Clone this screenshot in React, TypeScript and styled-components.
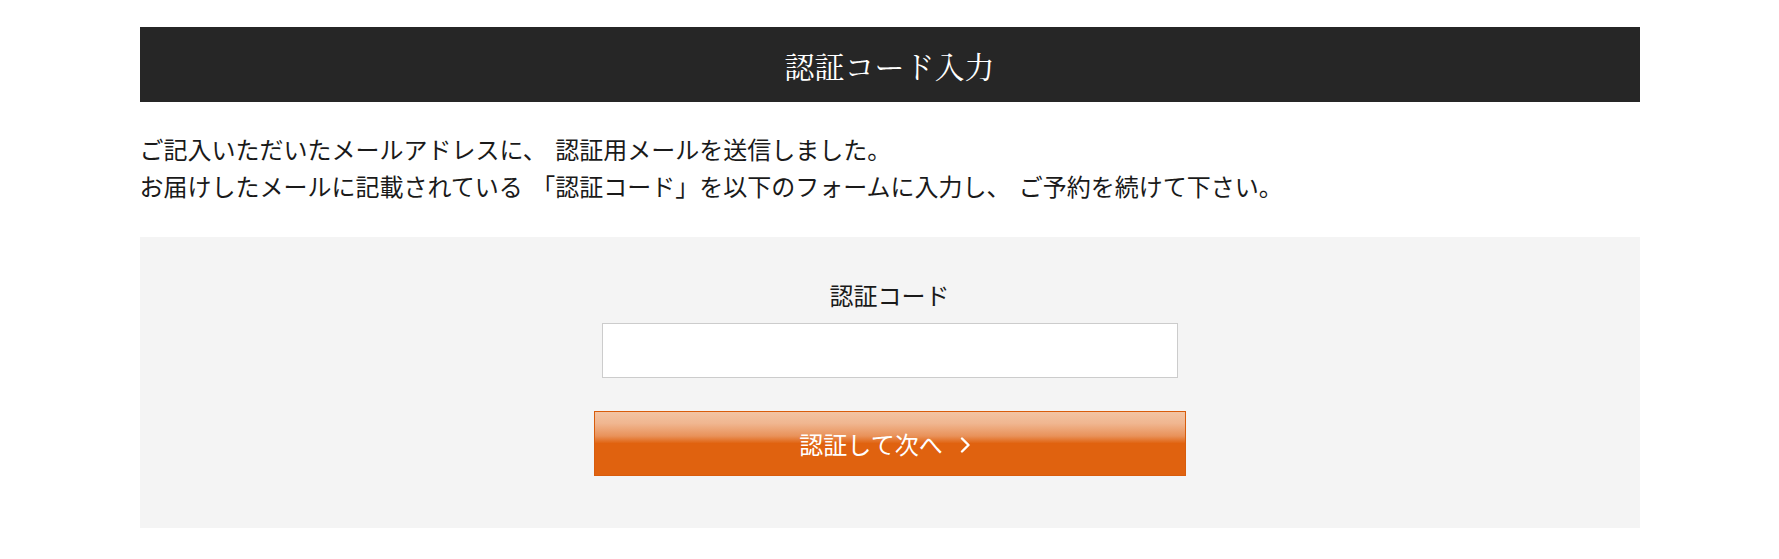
import React from "react";
import styled, { createGlobalStyle } from "styled-components";

const GlobalStyle = createGlobalStyle`
  html, body {
    margin: 0;
    padding: 0;
    background: #ffffff;
  }
  body {
    font-family: "Noto Sans CJK JP", "Noto Sans", sans-serif;
    color: #1a1a1a;
  }
  * { box-sizing: border-box; }
`;

const Page = styled.div`
  width: 1500px;
  margin: 0 auto;
  padding-top: 27px;
  padding-bottom: 31px;
  display: flex;
  flex-direction: column;
`;

const TitleBar = styled.h1`
  margin: 0;
  height: 75px;
  background: #262626;
  color: #ffffff;
  display: flex;
  align-items: center;
  justify-content: center;
  font-family: "Noto Serif CJK JP", "Noto Serif", "Liberation Serif", "Noto Sans CJK JP", serif;
  font-weight: 400;
  font-size: 30px;
  letter-spacing: 0;
`;

const Lead = styled.p`
  margin: 28px 0 0;
  font-size: 24px;
  line-height: 37px;
  word-spacing: 3px;
  color: #1a1a1a;
`;

const FormPanel = styled.section`
  margin-top: 33px;
  background: #f4f4f4;
  height: 291px;
  padding-top: 40px;
  display: flex;
  flex-direction: column;
  align-items: center;
`;

const FieldLabel = styled.label`
  font-size: 24px;
  line-height: 36px;
  color: #1a1a1a;
`;

const CodeInput = styled.input`
  margin-top: 10px;
  width: 576px;
  height: 55px;
  border: 1px solid #cccccc;
  background: #ffffff;
  border-radius: 0;
  outline: none;
  padding: 0 12px;
  font-size: 20px;
  font-family: inherit;
`;

const SubmitButton = styled.button`
  margin-top: 33px;
  width: 592px;
  height: 65px;
  border: 1px solid #d85c0c;
  border-radius: 0;
  background: linear-gradient(
    to bottom,
    #f3c4a3 0%,
    #f0b690 18%,
    #e9925a 38%,
    #e0620f 50%,
    #e0620f 100%
  );
  color: #ffffff;
  font-family: "Noto Sans CJK JP", "Noto Sans", sans-serif;
  font-size: 24px;
  display: flex;
  align-items: center;
  justify-content: center;
  gap: 17px;
  padding: 0 10px 0 0;
  cursor: pointer;
`;

const Chevron = styled.svg`
  width: 10px;
  height: 16px;
  margin-top: 2px;
`;

export default function App() {
  return (
    <>
      <GlobalStyle />
      <Page>
        <TitleBar>認証コード入力</TitleBar>
        <Lead>
          ご記入いただいたメールアドレスに、 認証用メールを送信しました。
          <br />
          お届けしたメールに記載されている 「認証コード」を以下のフォームに入力し、 ご予約を続けて下さい。
        </Lead>
        <FormPanel>
          <FieldLabel htmlFor="authcode">認証コード</FieldLabel>
          <CodeInput id="authcode" type="text" />
          <SubmitButton type="button">
            <span>認証して次へ</span>
            <Chevron viewBox="0 0 10 16" fill="none">
              <polyline
                points="2,1.5 8.5,8 2,14.5"
                stroke="#ffffff"
                strokeWidth="2.4"
                strokeLinecap="round"
                strokeLinejoin="round"
              />
            </Chevron>
          </SubmitButton>
        </FormPanel>
      </Page>
    </>
  );
}
